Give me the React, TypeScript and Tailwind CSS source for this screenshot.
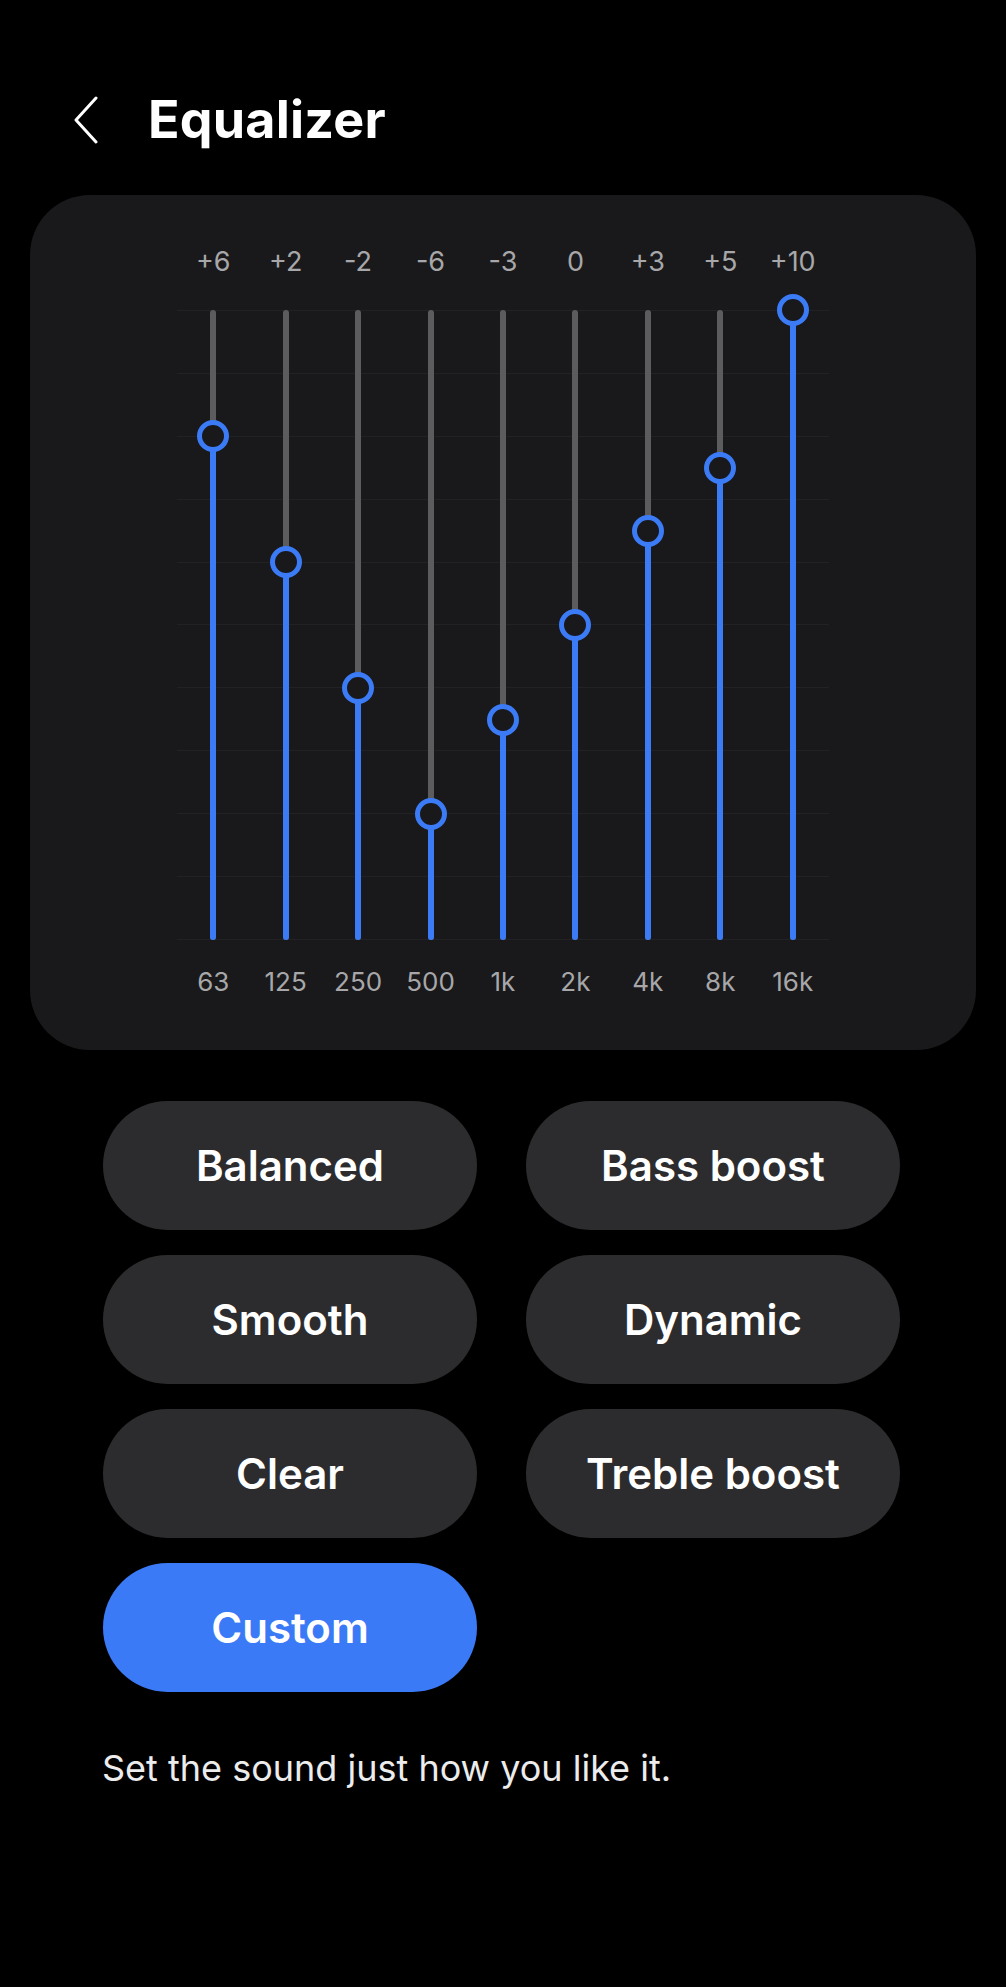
import React from 'react';

const bands = [
    { freq: '63', value: 6 },
    { freq: '125', value: 2 },
    { freq: '250', value: -2 },
    { freq: '500', value: -6 },
    { freq: '1k', value: -3 },
    { freq: '2k', value: 0 },
    { freq: '4k', value: 3 },
    { freq: '8k', value: 5 },
    { freq: '16k', value: 10 },
];

const presets = ['Balanced', 'Bass boost', 'Smooth', 'Dynamic', 'Clear', 'Treble boost', 'Custom'];

const TRACK = 630;

const fmt = (v: number) => (v > 0 ? `+${v}` : `${v}`);

const App: React.FC = () => {
    return (
        <div className="min-h-[1987px] w-full bg-black text-white" style={{ fontFamily: 'Inter, "Noto Sans", sans-serif' }}>
            {/* header */}
            <div className="box-content flex h-[80px] items-center pl-[73px] pt-[80px]">
                <svg width="26" height="48" viewBox="0 0 26 48" fill="none">
                    <path d="M23 2 L3 24 L23 46" stroke="white" strokeWidth="3" strokeLinecap="round" strokeLinejoin="round" />
                </svg>
                <h1 className="ml-[49px] text-[52px] font-bold leading-none tracking-[0.2px]">Equalizer</h1>
            </div>

            {/* eq card */}
            <div className="mx-[30px] mt-[35px] flex flex-col items-center rounded-[60px] bg-[#19191b] pb-[50px] pt-[49px]">
                <div className="flex w-[652px]">
                    {bands.map((b) => (
                        <div key={b.freq} className="flex-1 text-center text-[27px] leading-[36px] text-[#a7a7a9]">
                            {fmt(b.value)}
                        </div>
                    ))}
                </div>

                <div className="relative mt-[30px] h-[630px] w-[652px]">
                    <div className="absolute inset-0 flex flex-col justify-between">
                        {Array.from({ length: 11 }).map((_, i) => (
                            <div key={i} className="h-px w-full bg-[#222224]" />
                        ))}
                    </div>
                    <div className="relative flex h-full">
                        {bands.map((b) => {
                            const fill = ((b.value + 10) / 20) * TRACK;
                            return (
                                <div key={b.freq} className="relative flex flex-1 justify-center">
                                    <div className="relative h-full w-[6px] rounded-full bg-[#5c5c5e]">
                                        <div
                                            className="absolute bottom-0 left-0 w-full rounded-full bg-[#3b7bf6]"
                                            style={{ height: fill }}
                                        />
                                    </div>
                                    <div
                                        className="absolute left-1/2 h-[32px] w-[32px] -translate-x-1/2 -translate-y-1/2 rounded-full border-[5px] border-[#3b7bf6] bg-[#19191b]"
                                        style={{ top: TRACK - fill }}
                                    />
                                </div>
                            );
                        })}
                    </div>
                </div>

                <div className="mt-[24px] flex w-[652px]">
                    {bands.map((b) => (
                        <div key={b.freq} className="flex-1 text-center text-[26px] leading-[36px] text-[#a7a7a9]">
                            {b.freq}
                        </div>
                    ))}
                </div>
            </div>

            {/* presets */}
            <div className="ml-[103px] mt-[51px] grid w-[797px] grid-cols-2 gap-x-[49px] gap-y-[25px]">
                {presets.map((p) => (
                    <button
                        key={p}
                        className={`h-[129px] rounded-full text-[42px] font-semibold text-white ${
                            p === 'Custom' ? 'bg-[#3a7af6]' : 'bg-[#2c2c2e]'
                        }`}
                    >
                        {p}
                    </button>
                ))}
            </div>

            <p className="ml-[102px] mt-[54px] text-[36px] leading-[44px] text-[#ececec]">
                Set the sound just how you like it.
            </p>
        </div>
    );
};

export default App;
